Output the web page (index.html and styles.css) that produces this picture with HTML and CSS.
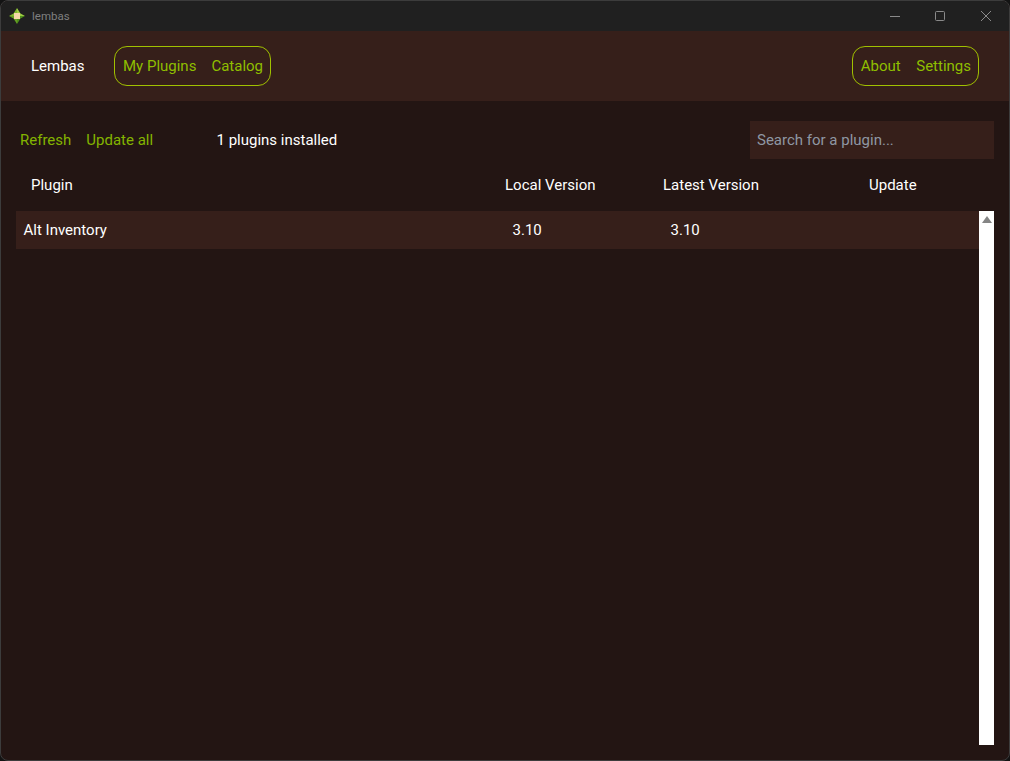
FILE: index.html
```html
<!DOCTYPE html>
<html lang="en">
<head>
<meta charset="utf-8">
<title>lembas</title>
<link rel="stylesheet" href="styles.css">
</head>
<body>
<div class="window">
  <div class="titlebar">
    <svg class="app-icon" width="16" height="16" viewBox="0 0 16 16">
      <path d="M8 0 8 8 0 8 4.5 5.5Z" fill="#7db52c"/>
      <path d="M8 0 11.5 5.5 16 8 8 8Z" fill="#9ccb42"/>
      <path d="M16 8 11.5 10.5 8 16 8 8Z" fill="#4f8f1c"/>
      <path d="M0 8 4.5 10.5 8 16 8 8Z" fill="#659f22"/>
      <rect x="5" y="5" width="6" height="6" fill="#f5d8a8"/>
    </svg>
    <span class="app-name">lembas</span>
    <div class="win-controls">
      <svg width="10" height="10" viewBox="0 0 10 10"><path d="M0 5.5H10" stroke="#8a8a8a"/></svg>
      <svg width="10" height="10" viewBox="0 0 10 10"><rect x=".5" y=".5" width="9" height="9" rx="1" fill="none" stroke="#8a8a8a"/></svg>
      <svg class="win-close" width="10" height="10" viewBox="0 0 10 10"><path d="M0 0 10 10M10 0 0 10" stroke="#8a8a8a"/></svg>
    </div>
  </div>
  <nav class="nav">
    <span class="brand">Lembas</span>
    <div class="pill"><a>My Plugins</a><a>Catalog</a></div>
    <div class="pill pill-right"><a>About</a><a>Settings</a></div>
  </nav>
  <main class="content">
    <div class="toolbar">
      <div class="actions"><a>Refresh</a><a>Update all</a></div>
      <span class="count">1 plugins installed</span>
      <div class="search">Search for a plugin...</div>
    </div>
    <div class="table-head">
      <span>Plugin</span><span>Local Version</span><span>Latest Version</span><span>Update</span>
    </div>
    <div class="list">
      <div class="rows">
        <div class="row"><span>Alt Inventory</span><span>3.10</span><span>3.10</span></div>
      </div>
      <div class="scrollbar"><span class="arrow"></span></div>
    </div>
  </main>
</div>
</body>
</html>
```
FILE: styles.css
```css
* { box-sizing: border-box; }
html, body { margin: 0; height: 100%; background: #131313; }
body { font-family: Roboto, "Liberation Sans", sans-serif; font-size: 15px; font-weight: 400; color: #fff; }
.window {
  height: 761px;
  display: flex;
  flex-direction: column;
  border: 1px solid #3c3c3c;
  border-radius: 8px;
  overflow: hidden;
  background: #231513;
}
.titlebar {
  height: 30px;
  flex: none;
  display: flex;
  align-items: center;
  background: #202020;
  padding-left: 8px;
}
.app-icon { flex: none; }
.app-name { margin-left: 7px; font-size: 11.5px; color: #7f7f7f; }
.win-controls { margin-left: auto; display: flex; gap: 35px; padding-right: 18px; }
.win-close { margin-left: 1px; }
.nav {
  height: 70px;
  flex: none;
  display: flex;
  align-items: center;
  background: #361f1a;
  padding: 0 30px;
}
.brand { width: 83px; font-weight: 450; }
.pill {
  height: 40px;
  display: flex;
  align-items: center;
  gap: 15px;
  padding: 0 7px 0 8px;
  border: 1px solid #a0c000;
  border-radius: 13px;
  color: #8fbe00;
}
.pill-right { margin-left: auto; gap: 15.5px; }
.content { flex: 1; display: flex; flex-direction: column; padding: 20px 15px 15px; min-height: 0; }
.toolbar { display: flex; align-items: center; height: 38px; padding-left: 4px; }
.actions { width: 196.5px; display: flex; gap: 15px; color: #83b400; }
.count { font-weight: 450; }
.search {
  margin-left: auto;
  width: 244px;
  height: 38px;
  display: flex;
  align-items: center;
  padding-left: 7px;
  background: #361f1a;
  color: #8f97a3;
}
.table-head {
  display: grid;
  grid-template-columns: 474px 158px 206px auto;
  height: 52px;
  align-items: center;
  padding-left: 15px;
  font-weight: 450;
}
.list { flex: 1; display: flex; min-height: 0; }
.rows { flex: 1; }
.row {
  display: grid;
  grid-template-columns: 489px 158px 1fr;
  align-items: center;
  height: 38px;
  padding-left: 7.5px;
  background: #361f1a;
  font-weight: 450;
}
.scrollbar { width: 15px; background: #fff; display: flex; justify-content: center; padding-top: 5px; }
.arrow {
  width: 0;
  height: 0;
  border-left: 5px solid transparent;
  border-right: 5px solid transparent;
  border-bottom: 7px solid #858585;
}
```
